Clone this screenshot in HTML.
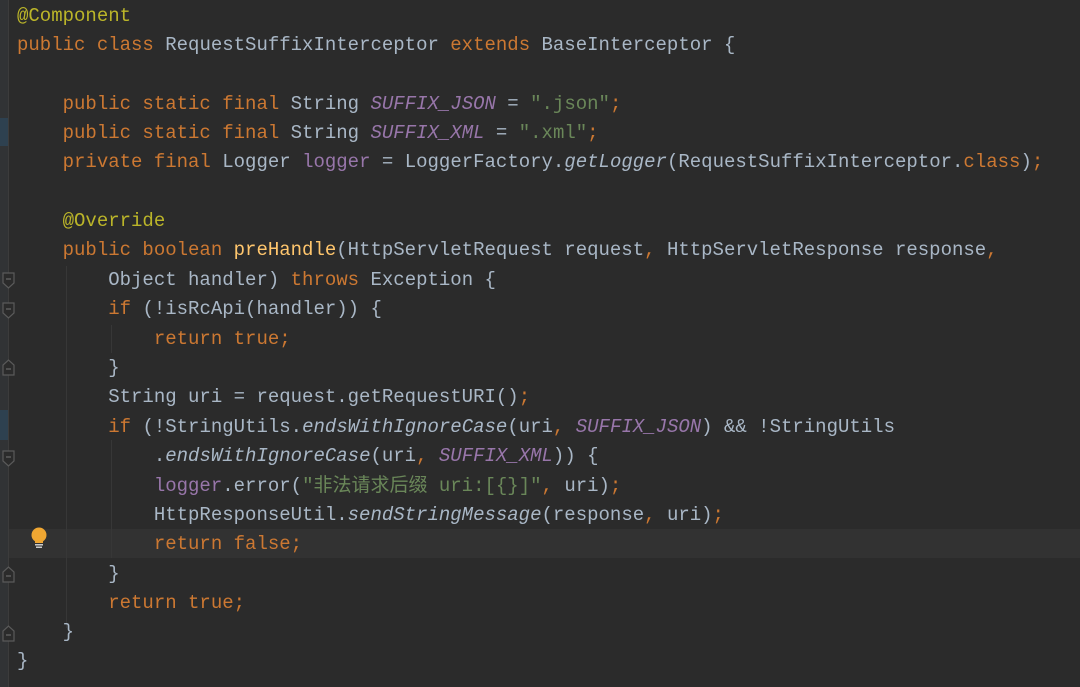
<!DOCTYPE html>
<html><head><meta charset="utf-8"><style>
body{margin:0;width:1080px;height:687px;background:#2b2b2b;overflow:hidden;position:relative;font-family:"Liberation Mono","Noto Sans CJK SC",monospace;font-size:19px;color:#a9b7c6}
.l{position:absolute;left:17px;white-space:pre;line-height:29px;height:29px}
.k{color:#cc7832}.a{color:#bbb529}.f{color:#9876aa}.s{color:#6a8759}.m{color:#ffc66d}.i{font-style:italic}
.g{position:absolute;left:0;top:0;width:8px;height:687px;background:#313335;border-right:1px solid #3c3c3c}
.b{position:absolute;left:0;width:8px;background:#2e4150}
.hl{position:absolute;left:9px;right:0;top:529px;height:29px;background:#323232}
.v{position:absolute;width:1px;background:#373737}
.fd{position:absolute;left:2px}
</style></head><body>
<div class="g"></div>
<div class="b" style="top:118px;height:28px"></div>
<div class="b" style="top:410px;height:30px"></div>
<div class="hl"></div>
<div class="v" style="left:66px;top:266px;height:362px"></div>
<div class="v" style="left:111px;top:325px;height:28px"></div>
<div class="v" style="left:111px;top:440px;height:118px"></div>
<svg class="fd" style="top:272px" width="13" height="17"><path d="M1 1H12V11L6.5 16L1 11Z" fill="#2b2b2b" stroke="#5a5a5a" stroke-width="1.2"/><path d="M4 7H9" stroke="#6a6a6a" stroke-width="1.2"/></svg>
<svg class="fd" style="top:302px" width="13" height="17"><path d="M1 1H12V11L6.5 16L1 11Z" fill="#2b2b2b" stroke="#5a5a5a" stroke-width="1.2"/><path d="M4 7H9" stroke="#6a6a6a" stroke-width="1.2"/></svg>
<svg class="fd" style="top:359px" width="13" height="17"><path d="M1 16H12V6L6.5 1L1 6Z" fill="#2b2b2b" stroke="#5a5a5a" stroke-width="1.2"/><path d="M4 10H9" stroke="#6a6a6a" stroke-width="1.2"/></svg>
<svg class="fd" style="top:450px" width="13" height="17"><path d="M1 1H12V11L6.5 16L1 11Z" fill="#2b2b2b" stroke="#5a5a5a" stroke-width="1.2"/><path d="M4 7H9" stroke="#6a6a6a" stroke-width="1.2"/></svg>
<svg class="fd" style="top:566px" width="13" height="17"><path d="M1 16H12V6L6.5 1L1 6Z" fill="#2b2b2b" stroke="#5a5a5a" stroke-width="1.2"/><path d="M4 10H9" stroke="#6a6a6a" stroke-width="1.2"/></svg>
<svg class="fd" style="top:625px" width="13" height="17"><path d="M1 16H12V6L6.5 1L1 6Z" fill="#2b2b2b" stroke="#5a5a5a" stroke-width="1.2"/><path d="M4 10H9" stroke="#6a6a6a" stroke-width="1.2"/></svg>
<svg style="position:absolute;left:30px;top:527px" width="18" height="24"><circle cx="9" cy="8" r="7.5" fill="#f0a732"/><rect x="5" y="13" width="8" height="3" fill="#f0a732"/><rect x="5" y="17" width="8" height="1.5" fill="#ccc"/><rect x="6" y="19.5" width="6" height="1.5" fill="#ccc"/></svg>
<div class="l" style="top:2px"><span class="a">@Component</span></div>
<div class="l" style="top:31px"><span class="k">public class </span>RequestSuffixInterceptor <span class="k">extends </span>BaseInterceptor {</div>
<div class="l" style="top:90px">    <span class="k">public static final </span>String <span class="f i">SUFFIX_JSON</span> = <span class="s">".json"</span><span class="k">;</span></div>
<div class="l" style="top:119px">    <span class="k">public static final </span>String <span class="f i">SUFFIX_XML</span> = <span class="s">".xml"</span><span class="k">;</span></div>
<div class="l" style="top:148px">    <span class="k">private final </span>Logger <span class="f">logger</span> = LoggerFactory.<span class="i">getLogger</span>(RequestSuffixInterceptor.<span class="k">class</span>)<span class="k">;</span></div>
<div class="l" style="top:207px">    <span class="a">@Override</span></div>
<div class="l" style="top:236px">    <span class="k">public boolean </span><span class="m">preHandle</span>(HttpServletRequest request<span class="k">, </span>HttpServletResponse response<span class="k">,</span></div>
<div class="l" style="top:266px">        Object handler) <span class="k">throws </span>Exception {</div>
<div class="l" style="top:295px">        <span class="k">if </span>(!isRcApi(handler)) {</div>
<div class="l" style="top:325px">            <span class="k">return true;</span></div>
<div class="l" style="top:354px">        }</div>
<div class="l" style="top:383px">        String uri = request.getRequestURI()<span class="k">;</span></div>
<div class="l" style="top:413px">        <span class="k">if </span>(!StringUtils.<span class="i">endsWithIgnoreCase</span>(uri<span class="k">, </span><span class="f i">SUFFIX_JSON</span>) &amp;&amp; !StringUtils</div>
<div class="l" style="top:442px">            .<span class="i">endsWithIgnoreCase</span>(uri<span class="k">, </span><span class="f i">SUFFIX_XML</span>)) {</div>
<div class="l" style="top:472px">            <span class="f">logger</span>.error(<span class="s">"非法请求后缀 uri:[{}]"</span><span class="k">, </span>uri)<span class="k">;</span></div>
<div class="l" style="top:501px">            HttpResponseUtil.<span class="i">sendStringMessage</span>(response<span class="k">, </span>uri)<span class="k">;</span></div>
<div class="l" style="top:530px">            <span class="k">return false;</span></div>
<div class="l" style="top:560px">        }</div>
<div class="l" style="top:589px">        <span class="k">return true;</span></div>
<div class="l" style="top:618px">    }</div>
<div class="l" style="top:647px">}</div>
</body></html>
